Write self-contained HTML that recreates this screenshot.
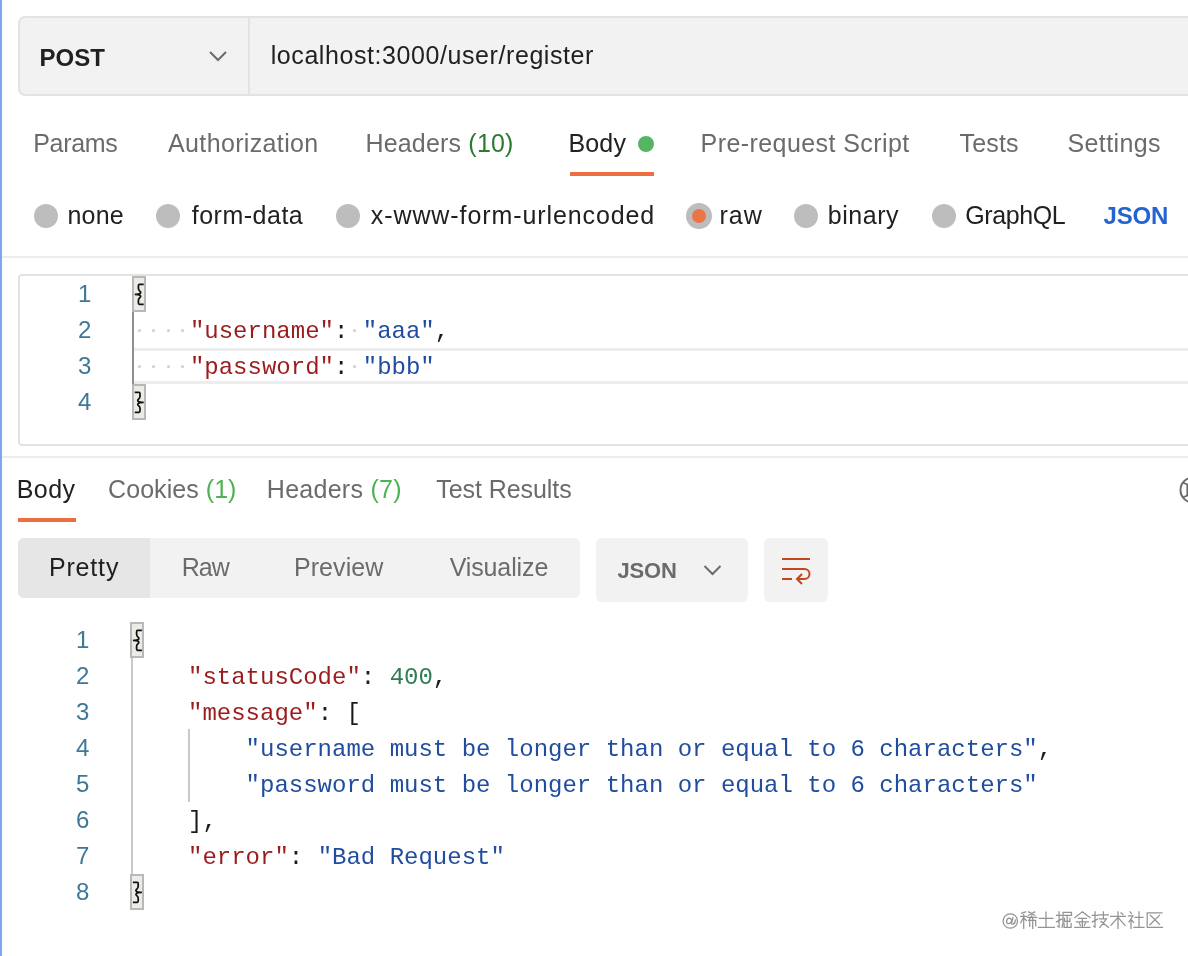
<!DOCTYPE html>
<html><head><meta charset="utf-8">
<style>
*{margin:0;padding:0;box-sizing:border-box}
html,body{width:1188px;height:956px;overflow:hidden;background:#fff}
body{position:relative;will-change:transform;font-family:"Liberation Sans",sans-serif;font-size:24px;color:#212121}
.a{position:absolute;white-space:pre;line-height:1}
.b{position:absolute}
.rad{position:absolute;width:24px;height:24px;border-radius:50%;background:#bdbdbd}
.hl{position:absolute;height:2px;background:#ededed}
.code{font-family:"Liberation Mono",monospace;font-size:24px;color:#1a1a1a}
.ln{color:#3d7898;font-size:24px}
.k{color:#9a1c1c}
.s{color:#214d9f}
.n{color:#2f7d52}
.br{position:absolute;width:14px;height:36px;background:#e9ede6;border:2px solid #b8b8b8}
.dot{position:absolute;width:3px;height:3px;border-radius:50%;background:#cfcfcf}
</style></head><body>
<div class="b" style="left:0;top:0;width:2px;height:956px;background:#7fa7f0"></div>
<div class="b" style="left:18px;top:16px;width:1200px;height:80px;background:#f2f2f2;border:2px solid #e3e3e3;border-radius:7px"></div>
<div class="b" style="left:248px;top:17px;width:2px;height:78px;background:#e3e3e3"></div>
<svg class="b" style="left:0;top:0" width="1188" height="956" viewBox="0 0 1188 956">
<path d="M210 52 L218 60 L226 52" fill="none" stroke="#6b6b6b" stroke-width="2"/>
</svg>

<div class="b" style="left:638px;top:136px;width:16px;height:16px;border-radius:50%;background:#55b562"></div>
<div class="b" style="left:570px;top:172px;width:84px;height:4px;background:#ec6f41"></div>

<div class="rad" style="left:34px;top:204px"></div>
<div class="rad" style="left:156px;top:204px"></div>
<div class="rad" style="left:336px;top:204px"></div>
<div class="rad" style="left:686px;top:203px;width:26px;height:26px"></div>
<div class="b" style="left:692px;top:209px;width:14px;height:14px;border-radius:50%;background:#ec7546"></div>
<div class="rad" style="left:794px;top:204px"></div>
<div class="rad" style="left:932px;top:204px"></div>

<div class="hl" style="left:2px;top:256px;width:1186px"></div>

<div class="b" style="left:18px;top:274px;width:1200px;height:172px;border:2px solid #e3e3e3;border-radius:4px"></div>
<div class="b" style="left:134px;top:348px;width:1100px;height:36px;border-top:3px solid #ededed;border-bottom:3px solid #ededed"></div>
<div class="b" style="left:132px;top:311px;width:2px;height:73px;background:#8f8f8f"></div>
<div class="br" style="left:132.2px;top:276px"></div>
<div class="br" style="left:132.2px;top:384px"></div>
<div class="dot" style="left:137.5px;top:329px"></div>
<div class="dot" style="left:152px;top:329px"></div>
<div class="dot" style="left:166.5px;top:329px"></div>
<div class="dot" style="left:181px;top:329px"></div>
<div class="dot" style="left:353px;top:329px"></div>
<div class="dot" style="left:137.5px;top:365px"></div>
<div class="dot" style="left:152px;top:365px"></div>
<div class="dot" style="left:166.5px;top:365px"></div>
<div class="dot" style="left:181px;top:365px"></div>
<div class="dot" style="left:353px;top:365px"></div>
<div class="a ln" style="left:78px;top:282px">1</div>
<div class="a ln" style="left:78px;top:318px">2</div>
<div class="a ln" style="left:78px;top:354px">3</div>
<div class="a ln" style="left:78px;top:390px">4</div>
<div class="a code" style="left:132.3px;top:320px">    <span class="k">"username"</span>: <span class="s">"aaa"</span>,</div>
<div class="a code" style="left:132.3px;top:356px">    <span class="k">"password"</span>: <span class="s">"bbb"</span></div>


<div class="hl" style="left:2px;top:456px;width:1186px"></div>

<div class="b" style="left:18px;top:518px;width:58px;height:4px;background:#ec6f41"></div>
<svg class="b" style="left:1160px;top:470px" width="28" height="40" viewBox="1160 470 28 40">
<circle cx="1193" cy="490" r="12.5" fill="none" stroke="#6b6b6b" stroke-width="2"/>
<path d="M1182.5 482.5 L1187.3 484.5 L1187.3 495.5 L1182.5 497.5" fill="none" stroke="#6b6b6b" stroke-width="1.8"/>
</svg>

<div class="b" style="left:18px;top:538px;width:562px;height:60px;background:#f2f2f2;border-radius:6px"></div>
<div class="b" style="left:18px;top:538px;width:132px;height:60px;background:#e6e6e6;border-radius:6px 0 0 6px"></div>
<div class="b" style="left:596px;top:538px;width:152px;height:64px;background:#f2f2f2;border-radius:6px"></div>
<div class="b" style="left:764px;top:538px;width:64px;height:64px;background:#f2f2f2;border-radius:6px"></div>
<svg class="b" style="left:0;top:0" width="1188" height="956" viewBox="0 0 1188 956">
<path d="M704.5 566 L712.5 574 L720.5 566" fill="none" stroke="#6b6b6b" stroke-width="2"/>
<path d="M782 559 H810 M782 569 H804.5 A5 5 0 0 1 804.5 579 H797 M782 579 H792 M802 574 L797 579 L802 584" fill="none" stroke="#c4461c" stroke-width="2"/>
</svg>

<div class="b" style="left:130.5px;top:657px;width:2px;height:218px;background:#c9c9c9"></div>
<div class="b" style="left:188px;top:729px;width:2px;height:73px;background:#c9c9c9"></div>
<div class="br" style="left:130.4px;top:622px"></div>
<div class="br" style="left:130.4px;top:874px"></div>
<div class="a ln" style="left:76px;top:628px">1</div>
<div class="a ln" style="left:76px;top:664px">2</div>
<div class="a ln" style="left:76px;top:700px">3</div>
<div class="a ln" style="left:76px;top:736px">4</div>
<div class="a ln" style="left:76px;top:772px">5</div>
<div class="a ln" style="left:76px;top:808px">6</div>
<div class="a ln" style="left:76px;top:844px">7</div>
<div class="a ln" style="left:76px;top:880px">8</div>
<div class="a code" style="left:130.4px;top:666px">    <span class="k">"statusCode"</span>: <span class="n">400</span>,</div>
<div class="a code" style="left:130.4px;top:702px">    <span class="k">"message"</span>: [</div>
<div class="a code" style="left:130.4px;top:738px">        <span class="s">"username must be longer than or equal to 6 characters"</span>,</div>
<div class="a code" style="left:130.4px;top:774px">        <span class="s">"password must be longer than or equal to 6 characters"</span></div>
<div class="a code" style="left:130.4px;top:810px">    ],</div>
<div class="a code" style="left:130.4px;top:846px">    <span class="k">"error"</span>: <span class="s">"Bad Request"</span></div>
<svg class="b" style="left:0;top:0" width="1188" height="956" viewBox="0 0 1188 956"><path transform="translate(132.2 276)" d="M11.5 8.4 H7.2 Q6.2 8.4 6.2 10 V12.3 Q6.2 13.9 7.6 15.1 Q9.1 16.4 8 17.4 Q7 18.4 2.5 18.4 Q7 18.4 7.8 19.4 Q9.1 20.4 7.6 21.7 Q6.2 22.9 6.2 24.5 V26.8 Q6.2 28.4 7.2 28.4 H11.5" fill="none" stroke="#111" stroke-width="1.75"/><path transform="translate(146.2 384) scale(-1 1)" d="M11.5 8.4 H7.2 Q6.2 8.4 6.2 10 V12.3 Q6.2 13.9 7.6 15.1 Q9.1 16.4 8 17.4 Q7 18.4 2.5 18.4 Q7 18.4 7.8 19.4 Q9.1 20.4 7.6 21.7 Q6.2 22.9 6.2 24.5 V26.8 Q6.2 28.4 7.2 28.4 H11.5" fill="none" stroke="#111" stroke-width="1.75"/><path transform="translate(130.4 622)" d="M11.5 8.4 H7.2 Q6.2 8.4 6.2 10 V12.3 Q6.2 13.9 7.6 15.1 Q9.1 16.4 8 17.4 Q7 18.4 2.5 18.4 Q7 18.4 7.8 19.4 Q9.1 20.4 7.6 21.7 Q6.2 22.9 6.2 24.5 V26.8 Q6.2 28.4 7.2 28.4 H11.5" fill="none" stroke="#111" stroke-width="1.75"/><path transform="translate(144.4 874) scale(-1 1)" d="M11.5 8.4 H7.2 Q6.2 8.4 6.2 10 V12.3 Q6.2 13.9 7.6 15.1 Q9.1 16.4 8 17.4 Q7 18.4 2.5 18.4 Q7 18.4 7.8 19.4 Q9.1 20.4 7.6 21.7 Q6.2 22.9 6.2 24.5 V26.8 Q6.2 28.4 7.2 28.4 H11.5" fill="none" stroke="#111" stroke-width="1.75"/></svg>

<div class="a" style="left:39.4px;top:46px;font-size:24px;font-weight:bold;color:#212121;letter-spacing:0.100px">POST</div>
<div class="a" style="left:270.7px;top:43px;font-size:25px;font-weight:normal;color:#212121;letter-spacing:0.578px">localhost:3000/user/register</div>
<div class="a" style="left:33.2px;top:131px;font-size:25px;font-weight:normal;color:#6b6b6b;letter-spacing:-0.320px">Params</div>
<div class="a" style="left:168.1px;top:131px;font-size:25px;font-weight:normal;color:#6b6b6b;letter-spacing:0.350px">Authorization</div>
<div class="a" style="left:365.4px;top:131px;font-size:25px;font-weight:normal;color:#6b6b6b;letter-spacing:0.191px">Headers <span style="color:#2b7a32">(10)</span></div>
<div class="a" style="left:568.4px;top:131px;font-size:25px;font-weight:normal;color:#212121;letter-spacing:0.200px">Body</div>
<div class="a" style="left:700.6px;top:131px;font-size:25px;font-weight:normal;color:#6b6b6b;letter-spacing:0.424px">Pre-request Script</div>
<div class="a" style="left:959.5px;top:131px;font-size:25px;font-weight:normal;color:#6b6b6b;letter-spacing:0.175px">Tests</div>
<div class="a" style="left:1067.5px;top:131px;font-size:25px;font-weight:normal;color:#6b6b6b;letter-spacing:0.386px">Settings</div>
<div class="a" style="left:67.5px;top:203px;font-size:25px;font-weight:normal;color:#212121;letter-spacing:0.167px">none</div>
<div class="a" style="left:191.7px;top:203px;font-size:25px;font-weight:normal;color:#212121;letter-spacing:0.512px">form-data</div>
<div class="a" style="left:370.8px;top:203px;font-size:25px;font-weight:normal;color:#212121;letter-spacing:0.905px">x-www-form-urlencoded</div>
<div class="a" style="left:719.4px;top:203px;font-size:25px;font-weight:normal;color:#212121;letter-spacing:1.100px">raw</div>
<div class="a" style="left:827.8px;top:203px;font-size:25px;font-weight:normal;color:#212121;letter-spacing:0.520px">binary</div>
<div class="a" style="left:965.2px;top:203px;font-size:25px;font-weight:normal;color:#212121;letter-spacing:-0.400px">GraphQL</div>
<div class="a" style="left:1103.4px;top:204px;font-size:24px;font-weight:bold;color:#2563d0;letter-spacing:-0.100px">JSON</div>
<div class="a" style="left:16.8px;top:477px;font-size:25px;font-weight:normal;color:#212121;letter-spacing:0.400px">Body</div>
<div class="a" style="left:108.1px;top:477px;font-size:25px;font-weight:normal;color:#6b6b6b;letter-spacing:0.050px">Cookies <span style="color:#4db352">(1)</span></div>
<div class="a" style="left:266.8px;top:477px;font-size:25px;font-weight:normal;color:#6b6b6b;letter-spacing:0.280px">Headers <span style="color:#4db352">(7)</span></div>
<div class="a" style="left:436.3px;top:477px;font-size:25px;font-weight:normal;color:#6b6b6b;letter-spacing:-0.073px">Test Results</div>
<div class="a" style="left:48.9px;top:555px;font-size:25px;font-weight:normal;color:#212121;letter-spacing:0.840px">Pretty</div>
<div class="a" style="left:181.7px;top:555px;font-size:25px;font-weight:normal;color:#6b6b6b;letter-spacing:-1.000px">Raw</div>
<div class="a" style="left:293.9px;top:555px;font-size:25px;font-weight:normal;color:#6b6b6b;letter-spacing:0.100px">Preview</div>
<div class="a" style="left:449.7px;top:555px;font-size:25px;font-weight:normal;color:#6b6b6b;letter-spacing:-0.125px">Visualize</div>
<div class="a" style="left:617.4px;top:560px;font-size:22px;font-weight:bold;color:#6b6b6b;letter-spacing:-0.167px">JSON</div>

<svg class="b" style="left:0;top:0" width="1188" height="956" viewBox="0 0 1188 956"><g fill="none" stroke="#939393" stroke-width="1.25" stroke-linecap="square"><circle cx="1010.3" cy="921" r="7.2"/><path d="M1013 917.5 L1011.6 923 Q1011.5 924.5 1013 924.2 Q1015.5 923.5 1015.3 920 M1011.8 920.8 Q1011.2 918 1009 918.2 Q1006.5 918.8 1006.6 921.8 Q1007 924.2 1009.2 923.6 Q1011 923 1011.8 920.8"/><path transform="translate(1020.7 911.3)" d="M1 1.8 L5 0.6 M0 5 H6 M3 1.2 V17 M3 6 L0 11.5 M3.6 7 L5.6 9.2 M8 0.6 L14 4 M14 0.6 L8 4 M7 6 H16 M11.2 4.5 L8 9 M9 9 V15 M9 9 H15 V14.5 M12 7 V17"/><path transform="translate(1038.4 911.3)" d="M1 7 H14.5 M7.6 0.8 V16 M0 16 H16"/><path transform="translate(1056.5 911.3)" d="M0 4.2 H5 M2.6 0.5 V15.8 L1.2 15 M0 10.5 L5 7.8 M6.5 1 H15 V4.2 H6.5 M6.5 1 V11.5 L5.5 16 M10.7 5.2 V16 M8 7 V10 H13.4 V7 M7.6 12 V16 H14.6 V12"/><path transform="translate(1074.4 911.3)" d="M8 0.5 L0.5 6.2 M8 0.5 L15.5 6.2 M4 7.2 H12 M2 10.5 H14 M8 7.2 V16 M5 12 L6 14 M11 12 L10 14 M0.5 16 H15.5"/><path transform="translate(1092.4 911.3)" d="M0 4.2 H5 M2.6 0.5 V15.8 L1.2 15 M0 10.5 L5 7.8 M6 3.6 H16 M11 0.5 V7 M7 7.5 H14 L7.5 16 M8.5 10 L16 16"/><path transform="translate(1110 911.3)" d="M0.5 5 H15.5 M8 0.5 V17 M8 6 L1 14 M8 6 L15 14 M11 1.5 L13 3.2"/><path transform="translate(1128 911.3)" d="M2 0.6 L3.5 2.2 M0.5 4.6 H5 L1 10.5 M3 8 V17 M4 9.2 L5.6 11 M7 6.2 H15 M11 0.5 V16 M6 16.2 H16"/><path transform="translate(1146.4 911.3)" d="M15.5 1.5 H0.8 V16 H16 M4 4 L13 13 M13 4 L3.5 13.5"/></g></svg>
</body></html>
